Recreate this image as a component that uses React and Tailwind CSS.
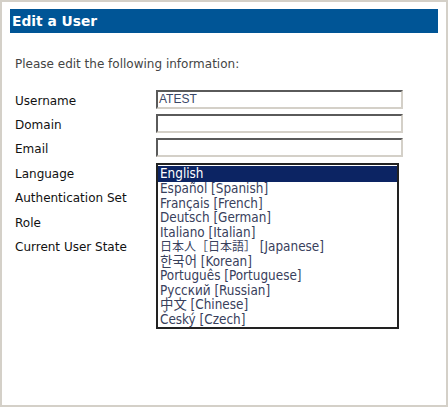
import React from "react";

const langs = [
  "Español [Spanish]",
  "Français [French]",
  "Deutsch [German]",
  "Italiano [Italian]",
  "JA",
  "한국어 [Korean]",
  "Português [Portuguese]",
  "Русский [Russian]",
  "中文 [Chinese]",
  "Český [Czech]",
];

const font = { fontFamily: '"DejaVu Sans", "Noto Sans CJK JP", sans-serif' };
const listFont = { fontFamily: '"DejaVu Sans Condensed", "DejaVu Sans", "Noto Sans CJK JP", sans-serif' };

function Input({ value }) {
  return (
    <div className="w-[247px] h-[19px] border-2 border-t-[#5a5a5a] border-l-[#5a5a5a] border-r-[#d4d0c8] border-b-[#d4d0c8] bg-white flex items-center pl-[1px] text-[12px] text-[#3a4766] font-['Liberation_Sans',sans-serif]">
      {value}
    </div>
  );
}

export default function App() {
  const labels = ["Username", "Domain", "Email", "Language", "Authentication Set", "Role", "Current User State"];
  return (
    <div className="w-[448px] h-[407px] bg-[#d4d0c8] pt-[2px] pl-[2px] pr-[2px] pb-[2px]">
      <div className="relative w-[444px] h-[403px] bg-white px-[8px] pt-[7px]" style={font}>
        <div className="h-[24px] bg-[#005596] text-white font-bold text-[13.8px] leading-[24px] pl-[2px]">
          Edit a User
        </div>
        <div className="mt-[23px] ml-[5px] h-[16px] leading-[16px] text-[12px] text-[#444]">
          Please edit the following information:
        </div>
        <div className="mt-[15px] ml-[5px] flex flex-col">
          {labels.map((l, i) => (
            <div key={l} className="h-[24.4px] flex items-center">
              <div className="w-[141px] text-[12px] text-[#111] pt-[3px]">{l}</div>
              {i === 0 && <Input value="ATEST" />}
              {(i === 1 || i === 2) && <Input value="" />}
            </div>
          ))}
        </div>
        <div
          className="absolute left-[154px] top-[161px] w-[243px] h-[166px] border-2 border-[#222] bg-white flex flex-col"
          style={listFont}
        >
          <div className="h-[17px] border-t border-white bg-[#0c2463] text-white text-[13.4px] leading-[16px] pl-[2px]">English</div>
          {langs.map((l) => (
            <div key={l} className="h-[14.5px] leading-[14.5px] text-[13.4px] text-[#38405c] pl-[2px] whitespace-nowrap">
              {l === "JA" ? (
                <>
                  <span className="text-[12px]">日本人［日本語］</span> [Japanese]
                </>
              ) : (
                l
              )}
            </div>
          ))}
        </div>
      </div>
    </div>
  );
}
